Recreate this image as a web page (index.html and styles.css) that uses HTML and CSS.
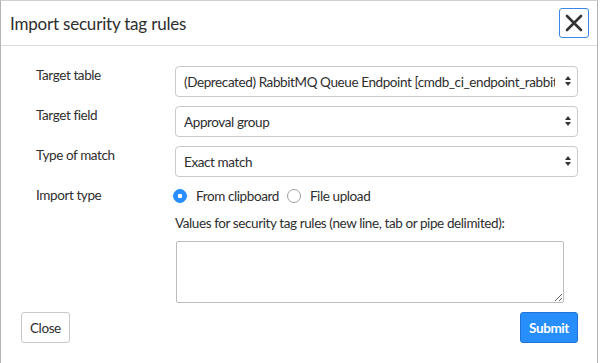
FILE: index.html
```html
<!DOCTYPE html>
<html lang="en">
<head>
    <meta charset="UTF-8">
    <meta name="viewport" content="width=device-width, initial-scale=1.0">
    <title>Import security tag rules</title>
    <link rel="stylesheet" href="styles.css">
</head>
<body>

    <div class="modal">
        <div class="modal-header">
            <h1 class="modal-title">Import security tag rules</h1>
            <button class="btn-close" aria-label="Close">
                <svg width="18" height="18" viewBox="0 0 18 18">
                    <path d="M2 2 L16 16 M16 2 L2 16" stroke="#333" stroke-width="2.6" stroke-linecap="round" fill="none"/>
                </svg>
            </button>
        </div>

        <div class="modal-body">
            <div class="form-row">
                <label class="form-label">Target table</label>
                <div class="select-wrap">
                    <select class="form-select">
                        <option>(Deprecated) RabbitMQ Queue Endpoint [cmdb_ci_endpoint_rabbitmq]</option>
                    </select>
                    <span class="select-arrow"></span>
                </div>
            </div>
            <div class="form-row">
                <label class="form-label">Target field</label>
                <div class="select-wrap">
                    <select class="form-select">
                        <option>Approval group</option>
                    </select>
                    <span class="select-arrow"></span>
                </div>
            </div>
            <div class="form-row">
                <label class="form-label">Type of match</label>
                <div class="select-wrap">
                    <select class="form-select">
                        <option>Exact match</option>
                    </select>
                    <span class="select-arrow"></span>
                </div>
            </div>
            <div class="form-row radio-row">
                <label class="form-label">Import type</label>
                <div class="radios">
                    <label class="radio"><input type="radio" name="import-type" checked> From clipboard</label>
                    <label class="radio"><input type="radio" name="import-type"> File upload</label>
                </div>
            </div>
            <div class="form-row values-row">
                <span></span>
                <div>
                    <div class="values-label">Values for security tag rules (new line, tab or pipe delimited):</div>
                    <textarea class="values"></textarea>
                </div>
            </div>
        </div>

        <div class="modal-footer">
            <button class="btn btn-default">Close</button>
            <button class="btn btn-primary">Submit</button>
        </div>
    </div>

</body>
</html>
```

FILE: styles.css
```css
body {
    margin: 0;
    font-family: 'Lato', sans-serif;
    font-size: 13.5px;
    letter-spacing: -0.4px;
    color: #2e2e2e;
    background-color: #fff;
}

.modal {
    width: 598px;
    box-sizing: border-box;
    border: 1px solid #b4b4b4;
    border-top-color: #d0d0d0;
    border-bottom: none;
    background-color: #fff;
}

.modal-header {
    height: 44px;
    display: flex;
    align-items: center;
    justify-content: space-between;
    padding: 0 8px 0 9px;
    border-bottom: 1px solid #dcdcdc;
}

.modal-title {
    margin: 0;
    font-size: 17px;
    font-weight: normal;
    letter-spacing: -0.2px;
    color: #2e2e2e;
}

.btn-close {
    width: 30px;
    height: 30px;
    padding: 0;
    display: flex;
    align-items: center;
    justify-content: center;
    background: #fff;
    border: 1px solid #3c86e6;
    border-radius: 3px;
}

.modal-body {
    padding: 20px 19px 0 35px;
}

.form-row {
    display: grid;
    grid-template-columns: 139px 1fr;
    margin-bottom: 9px;
}

.form-label {
    line-height: 15px;
    padding-top: 2px;
}

.select-wrap {
    position: relative;
}

.form-select {
    width: 100%;
    height: 31px;
    padding: 0 22px 0 8px;
    font-family: inherit;
    font-size: 13.5px;
    letter-spacing: -0.4px;
    color: #2e2e2e;
    background-color: #fff;
    border: 1px solid #cbcbcb;
    border-radius: 4px;
    appearance: none;
    -webkit-appearance: none;
}

/* little up/down triangles */
.select-arrow {
    position: absolute;
    right: 7px;
    top: 10px;
    width: 0;
    height: 0;
    border-left: 3.5px solid transparent;
    border-right: 3.5px solid transparent;
    border-bottom: 4px solid #333;
}

.select-arrow::after {
    content: '';
    position: absolute;
    left: -3.5px;
    top: 6px;
    border-left: 3.5px solid transparent;
    border-right: 3.5px solid transparent;
    border-top: 4px solid #333;
}

.radio-row {
    height: 20px;
    align-items: center;
    margin-bottom: 7px;
}

.radio-row .form-label {
    align-self: start;
}

.radios {
    display: flex;
    align-items: center;
    gap: 8px;
    margin-left: -2px;
}

.radio {
    display: flex;
    align-items: center;
    gap: 9px;
}

.radio input {
    appearance: none;
    -webkit-appearance: none;
    width: 14px;
    height: 14px;
    margin: 0;
    border: 1px solid #a0a0a0;
    border-radius: 50%;
    background: #fff;
}

.radio input:checked {
    border-color: #278efc;
    background: radial-gradient(circle, #fff 0 2px, #278efc 2.6px);
}

.values-row {
    margin-bottom: 0;
}

.values-label {
    line-height: 20px;
    margin-bottom: 8px;
}

.values {
    display: block;
    width: 388px;
    height: 62px;
    box-sizing: border-box;
    margin-left: 1px;
    border: 1px solid #bdbdbd;
    border-radius: 2px;
    font-family: inherit;
}

.modal-footer {
    display: flex;
    justify-content: space-between;
    padding: 9px 19px 20px 20px;
}

.btn {
    height: 31px;
    padding: 0 8px;
    font-family: inherit;
    font-size: 13.5px;
    letter-spacing: -0.4px;
    border-radius: 3px;
    cursor: pointer;
}

.btn-default {
    background-color: #fff;
    color: #2e2e2e;
    border: 1px solid #c8c8c8;
}

.btn-primary {
    background-color: #278efc;
    color: #fff;
    font-weight: bold;
    border: 1px solid #1f74d6;
}
```
